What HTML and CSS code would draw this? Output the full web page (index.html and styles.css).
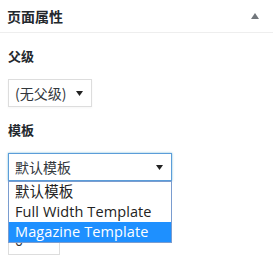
FILE: index.html
```html
<!DOCTYPE html>
<html>
<head>
<meta charset="utf-8">
<link rel="stylesheet" href="styles.css">
</head>
<body>
<div class="box">
  <div class="hd">
    <h2 class="title">页面属性</h2>
    <svg class="toggle" width="8" height="6" viewBox="0 0 8 6"><path d="M0 6 L4 0 L8 6 Z" fill="#72777c"/></svg>
  </div>
  <div class="inside">
    <p class="label">父级</p>
    <div class="sel sel-parent">
      <span>(无父级)</span>
      <svg class="caret" width="7" height="5" viewBox="0 0 7 5"><path d="M0 0 L7 0 L3.5 5 Z" fill="#222"/></svg>
    </div>
    <p class="label">模板</p>
    <div class="tpl-wrap">
      <div class="sel sel-tpl">
        <span>默认模板</span>
        <svg class="caret" width="7" height="5" viewBox="0 0 7 5"><path d="M0 0 L7 0 L3.5 5 Z" fill="#222"/></svg>
      </div>
      <ul class="menu">
        <li class="opt">默认模板</li>
        <li class="opt">Full Width Template</li>
        <li class="opt active">Magazine Template</li>
      </ul>
    </div>
    <p class="label">排序</p>
    <div class="num">0</div>
  </div>
</div>
</body>
</html>
```
FILE: styles.css
```css
* { box-sizing: border-box; }
html, body { margin: 0; padding: 0; background: #fff; }
body {
  font-family: "Open Sans", "Noto Sans CJK SC", sans-serif;
  color: #23282d;
  width: 273px;
  height: 256px;
  overflow: hidden;
}
.hd {
  height: 33px;
  border-bottom: 1px solid #eee;
  display: flex;
  align-items: center;
  justify-content: space-between;
  padding: 0 14px 0 7px;
}
.title {
  margin: 0;
  font-family: "Noto Sans CJK SC", sans-serif;
  font-size: 14px;
  font-weight: 700;
  line-height: 20px;
  color: #23282d;
}
.toggle { display: block; margin-top: -1px; }
.inside { padding: 0 8px; }
.label {
  margin: 13px 0 13px;
  font-family: "Noto Sans CJK SC", sans-serif;
  font-size: 13px;
  font-weight: 700;
  line-height: 20px;
  color: #23282d;
}
.sel {
  height: 28px;
  border: 1px solid #ddd;
  display: flex;
  align-items: center;
  justify-content: space-between;
  padding: 0 8px 0 6px;
  font-family: "Noto Sans CJK SC", sans-serif;
  font-size: 14px;
  color: #32373c;
  box-shadow: 0 1px 2px rgba(0,0,0,0.04);
}
.sel-parent { width: 84px; }
.caret { display: block; }
.tpl-wrap { position: relative; width: 164px; }
.sel-tpl { width: 164px; border-color: #5b9dd9; box-shadow: 0 0 2px rgba(30,140,190,0.6); }
.menu {
  position: absolute;
  left: 0;
  top: 28px;
  width: 164px;
  margin: 0;
  padding: 0;
  list-style: none;
  background: #fff;
  border: 1px solid #7a9ccf;
  z-index: 2;
}
.opt {
  height: 20px;
  line-height: 20px;
  padding: 0 6px;
  font-family: "Open Sans", "Noto Sans CJK SC", sans-serif;
  font-size: 14.5px;
  letter-spacing: 0.1px;
  color: #222;
  white-space: nowrap;
}
.opt.active { background: #1e90ff; color: #fff; }
.num {
  width: 52px;
  height: 28px;
  border: 1px solid #ddd;
  padding: 0 6px;
  font-size: 14px;
  line-height: 26px;
  color: #32373c;
}
```
